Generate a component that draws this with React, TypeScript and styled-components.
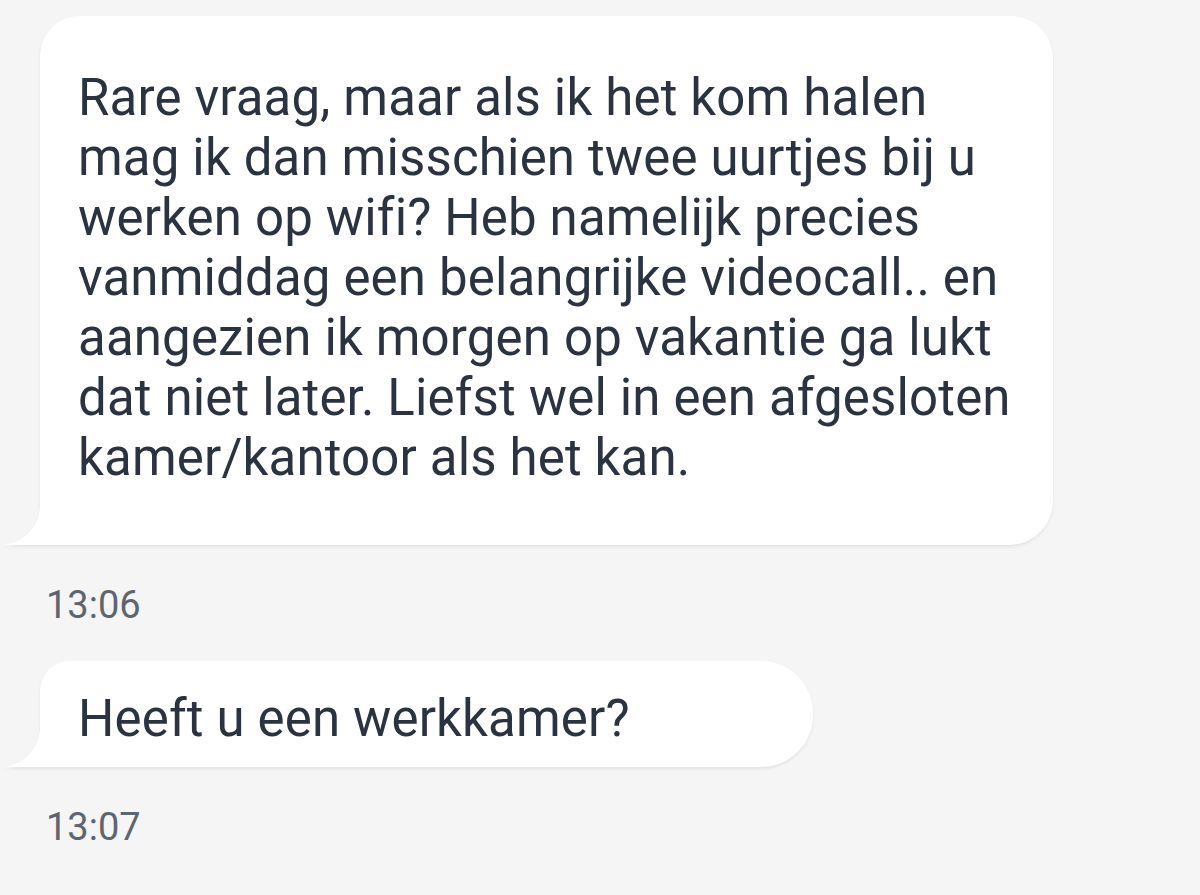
import React from 'react';
import styled, { createGlobalStyle } from 'styled-components';

const GlobalStyle = createGlobalStyle`
  html, body {
    margin: 0;
    padding: 0;
    background: #f5f5f5;
  }
  body {
    font-family: Roboto, "Noto Sans", "Liberation Sans", sans-serif;
  }
`;

const Thread = styled.div`
  display: flex;
  flex-direction: column;
  align-items: flex-start;
  padding: 16px 0 0 40px;
  width: 1200px;
  height: 895px;
  box-sizing: border-box;
  overflow: hidden;
`;

const Bubble = styled.div<{ $width: number; $pad: string; $radius: string }>`
  position: relative;
  box-sizing: border-box;
  width: ${(p) => p.$width}px;
  padding: ${(p) => p.$pad};
  background: #ffffff;
  border-radius: ${(p) => p.$radius};
  filter: drop-shadow(0 2px 1.5px rgba(0, 0, 0, 0.07));
  color: #2b3341;
  font-size: 51px;
  line-height: 60px;
  letter-spacing: 0.15px;

  &::before {
    content: '';
    position: absolute;
    left: -40px;
    bottom: 0;
    width: 40px;
    height: 40px;
    background: radial-gradient(circle at 0 0, transparent 39.5px, #ffffff 40.5px);
  }
`;

const Time = styled.div`
  margin: 38px 0 34px 6px;
  font-size: 38px;
  line-height: 44px;
  color: #5d6571;
`;

const App: React.FC = () => {
  return (
    <>
      <GlobalStyle />
      <Thread>
        <Bubble $width={1013} $pad="52px 30px 57px 38px" $radius="40px 42px 44px 0">
          Rare vraag, maar als ik het kom halen
          <br />
          mag ik dan misschien twee uurtjes bij u
          <br />
          werken op wifi? Heb namelijk precies
          <br />
          vanmiddag een belangrijke videocall.. en
          <br />
          aangezien ik morgen op vakantie ga lukt
          <br />
          dat niet later. Liefst wel in een afgesloten
          <br />
          kamer/kantoor als het kan.
        </Bubble>
        <Time>13:06</Time>
        <Bubble $width={773} $pad="28px 30px 18px 38px" $radius="30px 52px 52px 0">
          Heeft u een werkkamer?
        </Bubble>
        <Time>13:07</Time>
      </Thread>
    </>
  );
};

export default App;
